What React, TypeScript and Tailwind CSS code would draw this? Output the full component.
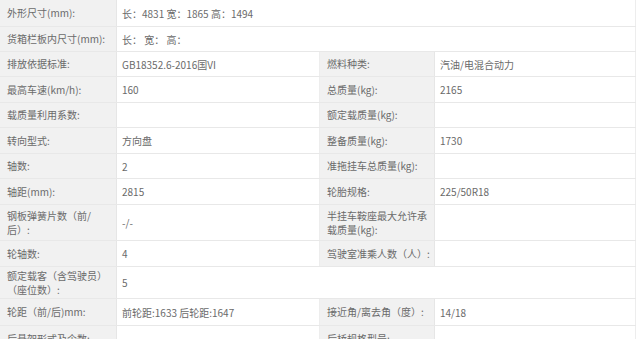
import React from "react";

type Cell = { label: string; value: string } | null;
type Row = { h: number; left: Cell; right: Cell; span?: boolean };

const rows: Row[] = [
  { h: 27, left: { label: "外形尺寸(mm):", value: "长：4831 宽：1865 高：1494" }, right: null, span: true },
  { h: 25, left: { label: "货箱栏板内尺寸(mm):", value: "长：  宽：  高：" }, right: null, span: true },
  { h: 25, left: { label: "排放依据标准:", value: "GB18352.6-2016国VI" }, right: { label: "燃料种类:", value: "汽油/电混合动力" } },
  { h: 26, left: { label: "最高车速(km/h):", value: "160" }, right: { label: "总质量(kg):", value: "2165" } },
  { h: 25, left: { label: "载质量利用系数:", value: "" }, right: { label: "额定载质量(kg):", value: "" } },
  { h: 26, left: { label: "转向型式:", value: "方向盘" }, right: { label: "整备质量(kg):", value: "1730" } },
  { h: 25, left: { label: "轴数:", value: "2" }, right: { label: "准拖挂车总质量(kg):", value: "" } },
  { h: 26, left: { label: "轴距(mm):", value: "2815" }, right: { label: "轮胎规格:", value: "225/50R18" } },
  { h: 36, left: { label: "钢板弹簧片数（前/后）:", value: "-/-" }, right: { label: "半挂车鞍座最大允许承载质量(kg):", value: "" } },
  { h: 26, left: { label: "轮轴数:", value: "4" }, right: { label: "驾驶室准乘人数（人）:", value: "" } },
  { h: 32, left: { label: "额定载客（含驾驶员）（座位数）:", value: "5" }, right: null, span: true },
  { h: 27, left: { label: "轮距（前/后)mm:", value: "前轮距:1633 后轮距:1647" }, right: { label: "接近角/离去角（度）:", value: "14/18" } },
  { h: 27, left: { label: "后悬架形式及个数:", value: "" }, right: { label: "后桥规格型号:", value: "" } },
];

function Label({ text, w }: { text: string; w: string }) {
  return (
    <div className={`${w} shrink-0 bg-[#f1f1f1] flex items-center pl-[7px] pr-[4px] text-[#6a6a6a] leading-[14px] border-r border-[#e6e6e6]`}>
      <span>{text}</span>
    </div>
  );
}

function Value({ text, w }: { text: string; w: string }) {
  return (
    <div className={`${w} shrink-0 bg-white flex items-center pl-[5px] text-[#6a6a6a] border-r border-[#ededed]`}>
      <span>{text}</span>
    </div>
  );
}

export default function App() {
  return (
    <div
      className="w-[640px] h-[339px] overflow-hidden bg-white text-[10px]"
      style={{ fontFamily: '"Noto Sans CJK SC", "Noto Sans", sans-serif' }}
    >
      <div className="w-[636px] flex flex-col">
        {rows.map((r, i) => (
          <div key={i} className="flex border-b border-[#e8e8e8]" style={{ height: r.h }}>
            {r.left && <Label text={r.left.label} w="w-[117px]" />}
            {r.span ? (
              <Value text={r.left ? r.left.value : ""} w="w-[519px]" />
            ) : (
              <>
                <Value text={r.left ? r.left.value : ""} w="w-[203px]" />
                {r.right && <Label text={r.right.label} w="w-[115px]" />}
                <Value text={r.right ? r.right.value : ""} w="w-[201px]" />
              </>
            )}
          </div>
        ))}
      </div>
    </div>
  );
}
